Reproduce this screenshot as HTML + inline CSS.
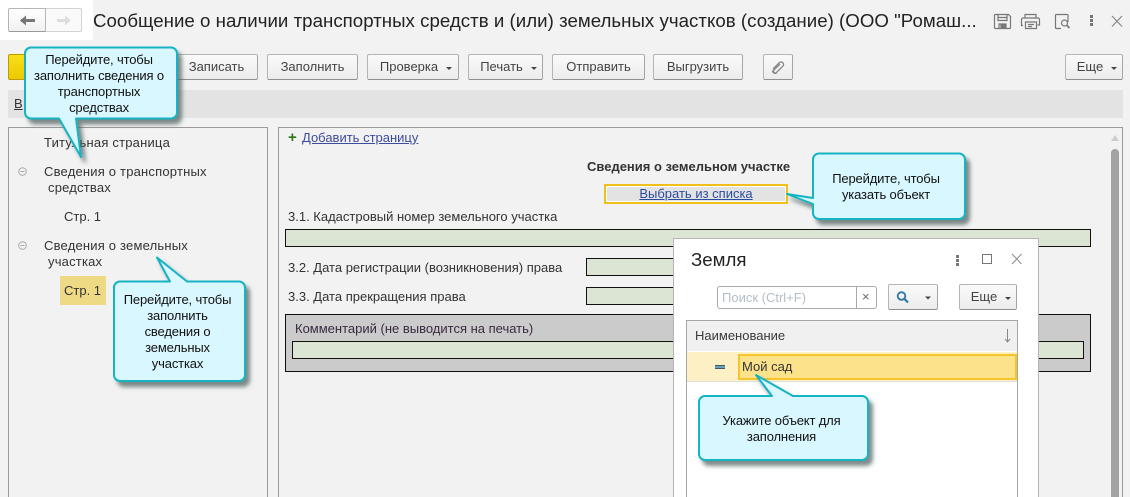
<!DOCTYPE html>
<html lang="ru"><head><meta charset="utf-8"><style>
html,body{margin:0;padding:0;width:1130px;height:497px;overflow:hidden}
#p{width:1130px;height:497px;position:relative;overflow:hidden;background:#f2f2f2;font:13px/14px "Liberation Sans",sans-serif;color:#333}
.a{position:absolute;white-space:nowrap}
.b{position:absolute;box-sizing:border-box;height:26px;top:54px;border:1px solid #b5b5b5;border-bottom:1px solid #8f8f8f;border-right-color:#a5a5a5;border-radius:2px;background:linear-gradient(#fafafa,#ececec);text-align:center;line-height:24px;color:#444;white-space:nowrap}
.m{padding-left:6px}
.arr{display:inline-block;width:0;height:0;border:3px solid transparent;border-top:3px solid #444;border-bottom:0;margin-left:8px;vertical-align:1px}
.f{position:absolute;box-sizing:border-box;background:#dce5d3;border:1px solid #111}
.c{position:absolute;text-align:center;color:#111;line-height:16px;white-space:nowrap;letter-spacing:-.15px}
.t{letter-spacing:.2px}
a{color:#2a4ca0;text-decoration:underline}
</style></head><body><div id="p">
<div class="a" style="left:0;top:0;width:93px;height:40px;background:#fff"></div>
<div class="a" style="left:8px;top:8px;width:38px;height:24px;box-sizing:border-box;border:1px solid #b5b5b5;border-bottom-color:#999;border-radius:2px 0 0 2px;background:linear-gradient(#fff,#f1f1f1)"></div>
<div class="a" style="left:46px;top:8px;width:36px;height:24px;box-sizing:border-box;border:1px solid #d2d2d2;border-left:0;border-radius:0 2px 2px 0;background:#fafafa"></div>
<svg class="a" style="left:15px;top:12px" width="70" height="16"><path d="M6 8.500H20" stroke="#777" stroke-width="3"/><path d="M11 3.500L5 8.500L11 13.500Z" fill="#777"/><path d="M42 8.500H54" stroke="#ddd" stroke-width="3"/><path d="M50 3.500L56 8.500L50 13.500Z" fill="#ddd"/></svg>
<div class="a" style="left:93px;top:9px;font-size:18.67px;line-height:24px;color:#222;letter-spacing:.03px">Сообщение о наличии транспортных средств и (или) земельных участков (создание) (ООО "Ромаш...</div>

<svg class="a" style="left:990px;top:10px" width="140" height="22" fill="none" stroke="#777" stroke-width="1.200">
<path d="M5.500 4.500H18.500L20.500 6.500V17.500A1 1 0 0 1 19.500 18.500H5.500A1 1 0 0 1 4.500 17.500V5.500A1 1 0 0 1 5.500 4.500Z"/><path d="M8 5V10.500H17V5M8 7.500H17"/><path d="M9 18V14H16V18"/><rect x="11" y="15" width="4" height="3" fill="#777"/>
<path d="M35 8V4.500H46V8M33 15.500H31.500V9.500A1.500 1.500 0 0 1 33 8H48A1.500 1.500 0 0 1 49.500 9.500V15H47.500"/><path d="M35.500 12H46.500V18.500H35.500ZM38 14.500H44M38 16.500H42"/><path d="M71 18.500H66.500A1 1 0 0 1 65.500 17.500V5.500A1 1 0 0 1 66.500 4.500H77A1 1 0 0 1 78 5.500V12"/><circle cx="74.500" cy="13" r="3"/><path d="M77 15.500L79.500 18" stroke-width="1.800"/>
<path d="M122 6L132 16.500M132 6L122 16.500" stroke="#888"/></svg>
<div class="a" style="left:1090px;top:15px;width:3px;height:3px;background:#777;box-shadow:0 4px 0 #777,0 8px 0 #777"></div>

<div class="a" style="left:8px;top:54px;width:60px;height:26px;box-sizing:border-box;border:1px solid #b89e00;border-radius:2px;background:linear-gradient(#f7df1a,#ecc900)"></div>
<div class="b" style="left:175px;width:83px">Записать</div>
<div class="b" style="left:267px;width:91px">Заполнить</div>
<div class="b m" style="left:367px;width:92px">Проверка<i class="arr"></i></div>
<div class="b m" style="left:468px;width:75px">Печать<i class="arr"></i></div>
<div class="b" style="left:552px;width:93px">Отправить</div>
<div class="b" style="left:653px;width:90px">Выгрузить</div>
<div class="b" style="left:763px;width:30px"></div>
<svg class="a" style="left:770px;top:59px" width="16" height="16" fill="none" stroke="#888" stroke-width="1.300"><path d="M3 10L9.500 3.500A2.500 2.500 0 0 1 13 7L6.500 13.500A1.700 1.700 0 0 1 4 11L10 5"/><path d="M2.500 11.500A2.700 2.700 0 0 0 6.500 14"/></svg>
<div class="b m" style="left:1065px;width:58px">Еще<i class="arr"></i></div>

<div class="a" style="left:8px;top:90px;width:1115px;height:28px;background:#e3e3e3"></div>
<div class="a" style="left:14px;top:97px;text-decoration:underline;color:#333">В</div>

<div class="a" style="left:8px;top:127px;width:260px;height:380px;box-sizing:border-box;border:1px solid #9a9a9a"></div>
<div class="a" style="left:278px;top:127px;width:845px;height:380px;box-sizing:border-box;border:1px solid #9a9a9a"></div>
<div class="a t" style="left:44px;top:136px">Титульная страница</div>
<svg class="a" style="left:17px;top:166px" width="12" height="90" fill="none" stroke="#aaa"><circle cx="5.500" cy="5.500" r="3.800"/><path d="M3.500 5.500H7.500"/><circle cx="5.500" cy="79.500" r="3.800"/><path d="M3.500 79.500H7.500"/></svg>
<div class="a t" style="left:44px;top:165px">Сведения о транспортных</div>
<div class="a t" style="left:48px;top:181px">средствах</div>
<div class="a" style="left:64px;top:210px">Стр. 1</div>
<div class="a t" style="left:44px;top:239px">Сведения о земельных</div>
<div class="a t" style="left:48px;top:255px">участках</div>
<div class="a" style="left:60px;top:276px;width:46px;height:29px;background:#eeda85"></div>
<div class="a" style="left:64px;top:284px">Стр. 1</div>

<div class="a" style="left:288px;top:131px;color:#2a7a10;font-weight:bold;font-size:15px">+</div>
<div class="a" style="left:302px;top:131px"><a style="color:#3d4c9c">Добавить страницу</a></div>
<div class="a" style="left:587px;top:160px;font-weight:bold;color:#333">Сведения о земельном участке</div>
<div class="a" style="left:604px;top:184px;width:184px;height:20px;box-sizing:border-box;border:2px solid #f0bf1b;background:#e3e3e3;text-align:center;line-height:16px;box-shadow:inset 0 0 0 1px #fff"><a>Выбрать из списка</a></div>
<div class="a" style="left:288px;top:210px">3.1. Кадастровый номер земельного участка</div>
<div class="f" style="left:285px;top:229px;width:806px;height:18px"></div>
<div class="a" style="left:288px;top:261px">3.2. Дата регистрации (возникновения) права</div>
<div class="f" style="left:586px;top:258px;width:100px;height:18px"></div>
<div class="a" style="left:288px;top:290px">3.3. Дата прекращения права</div>
<div class="f" style="left:586px;top:287px;width:100px;height:18px"></div>
<div class="a" style="left:285px;top:314px;width:806px;height:58px;box-sizing:border-box;border:1px solid #111;background:#cbcbcb"></div>
<div class="a" style="left:295px;top:322px;color:#3a2a40">Комментарий (не выводится на печать)</div>
<div class="f" style="left:292px;top:341px;width:792px;height:18px"></div>

<div class="a" style="left:1111px;top:135px;width:0;height:0;border:4px solid transparent;border-top:0;border-bottom:6px solid #ccc"></div>
<div class="a" style="left:1111px;top:149px;width:8px;height:348px;border-radius:4px 4px 0 0;background:#a3a3a3"></div>

<div class="a" style="left:673px;top:238px;width:366px;height:270px;box-sizing:border-box;border:1px solid #b5b5b5;background:#fff"></div>
<div class="a" style="left:691px;top:249px;font-size:18.67px;line-height:22px;color:#222">Земля</div>
<div class="a" style="left:956px;top:255px;width:3px;height:3px;background:#777;box-shadow:0 4px 0 #777,0 8px 0 #777"></div>
<svg class="a" style="left:980px;top:253px" width="45" height="14" fill="none" stroke="#777"><rect x="2.500" y="1.500" width="9" height="9"/><path d="M32 1L41.500 11M41.500 1L32 11" stroke="#888"/></svg>
<div class="a" style="left:717px;top:286px;width:160px;height:23px;box-sizing:border-box;border:1px solid #aaa;border-radius:3px;background:#fff"></div>
<div class="a" style="left:856px;top:287px;width:1px;height:21px;background:#aaa"></div>
<div class="a" style="left:722px;top:291px;color:#b3bec6">Поиск (Ctrl+F)</div>
<div class="a" style="left:862px;top:290px;color:#666">×</div>
<div class="b" style="left:888px;top:284px;width:50px"></div>
<svg class="a" style="left:895px;top:290px" width="38" height="14" fill="none" stroke="#2f78a8" stroke-width="1.800"><circle cx="6.500" cy="6" r="3.800"/><path d="M9.500 9L13 12.500" stroke-width="2.200"/><path d="M30 6.500H36L33 9.500Z" fill="#444" stroke="none"/></svg>
<div class="b m" style="left:959px;top:284px;width:58px">Еще<i class="arr"></i></div>

<div class="a" style="left:686px;top:320px;width:332px;height:190px;box-sizing:border-box;border:1px solid #a5a5a5;background:#fff"></div>
<div class="a" style="left:687px;top:321px;width:330px;height:30px;background:#f0f0f0"></div>
<div class="a" style="left:695px;top:329px;color:#3a3a3a">Наименование</div>
<svg class="a" style="left:1003px;top:328px" width="10" height="16" fill="none" stroke="#888"><path d="M4.500 1V13M2 11L4.500 14L7 11"/></svg>
<div class="a" style="left:687px;top:352px;width:330px;height:29px;background:#fdf0c4"></div>
<div class="a" style="left:687px;top:381px;width:330px;height:1px;background:#dedede"></div>
<div class="a" style="left:715px;top:365px;width:10px;height:4px;background:#6c9ec0;border-top:1px solid #456;border-bottom:1px solid #456;box-sizing:border-box"></div>
<div class="a" style="left:738px;top:354px;width:279px;height:26px;box-sizing:border-box;border:2px solid #f6c42b;background:#fde28c;padding-left:2px;line-height:22px;color:#333">Мой сад</div>

<svg class="a" style="left:0;top:0" width="1130" height="497"><defs><filter id="s" x="-20%" y="-20%" width="140%" height="150%"><feDropShadow dx="4" dy="5" stdDeviation="2.200" flood-color="#4a5a5a" flood-opacity=".7"/></filter></defs>
<g fill="#d9f7fe" stroke="#13b3c2" stroke-width="2" stroke-linejoin="round" filter="url(#s)">
<path d="M31 47.500H171A6 6 0 0 1 177 53.500V112.500A6 6 0 0 1 171 118.500H76L81 157L59 118.500H31A6 6 0 0 1 25 112.500V53.500A6 6 0 0 1 31 47.500Z"/>
<path d="M120 281.500H170L157 257.500L187 281.500H239A6 6 0 0 1 245 287.500V375A6 6 0 0 1 239 381H120A6 6 0 0 1 114 375V287.500A6 6 0 0 1 120 281.500Z"/>
<path d="M819 153.500H959A6 6 0 0 1 965 159.500V213A6 6 0 0 1 959 219H819A6 6 0 0 1 813 213V204L787 194L813 198V159.500A6 6 0 0 1 819 153.500Z"/>
<path d="M705 396H772L756 375L793 396H862A6 6 0 0 1 868 402V454A6 6 0 0 1 862 460H705A6 6 0 0 1 699 454V402A6 6 0 0 1 705 396Z"/>
</g></svg>
<div class="c" style="left:23px;top:52px;width:152px">Перейдите, чтобы<br>заполнить сведения о<br>транспортных<br>средствах</div>
<div class="c" style="left:112px;top:292px;width:131px">Перейдите, чтобы<br>заполнить<br>сведения о<br>земельных<br>участках</div>
<div class="c" style="left:810px;top:171px;width:152px">Перейдите, чтобы<br>указать объект</div>
<div class="c" style="left:699px;top:413px;width:165px">Укажите объект для<br>заполнения</div>
</div></body></html>
